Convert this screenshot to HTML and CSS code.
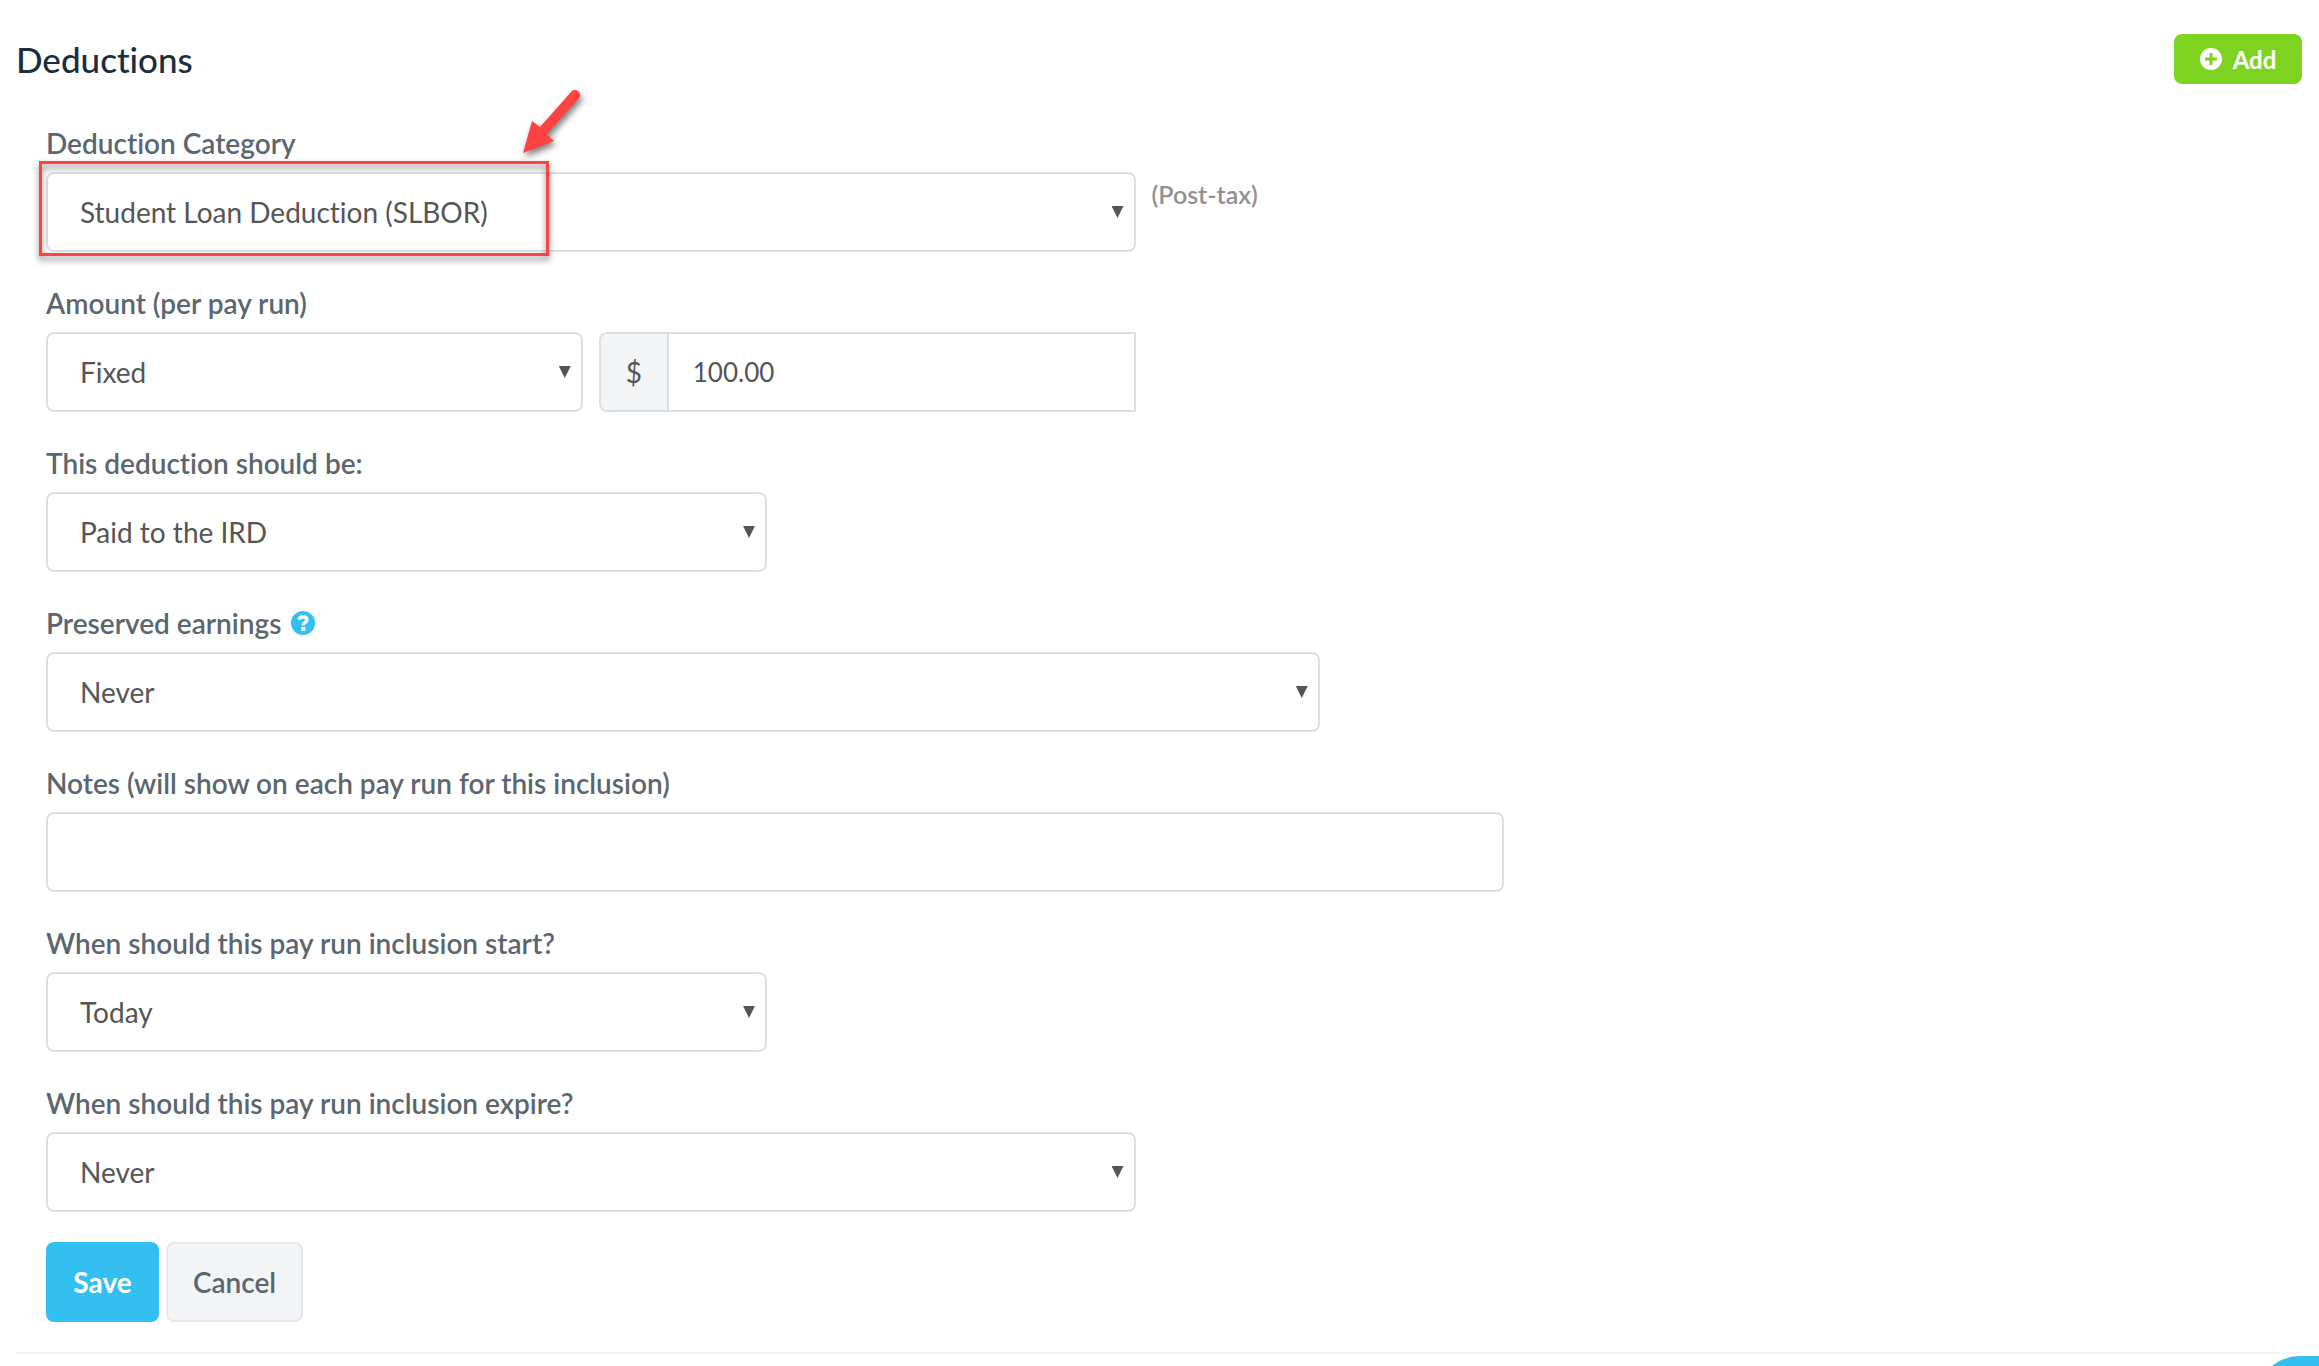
FILE: index.html
```
<!DOCTYPE html>
<html lang="en">
<head>
	<meta charset="utf-8">
	<title>Deductions</title>
	<link rel="stylesheet" href="styles.css">
</head>
<body>

<div class="panel">
	<div class="panel-header">
		<h2>Deductions</h2>
		<button type="button" class="btn btn-add">
			<svg class="icon-plus" viewBox="0 0 22 22" aria-hidden="true">
				<circle cx="11" cy="11" r="11" fill="#fff"/>
				<path d="M11 5v12M5 11h12" stroke="#7ed321" stroke-width="3"/>
			</svg>
			Add
		</button>
	</div>

	<form class="form">
		<div class="form-group">
			<label for="category">Deduction Category</label>
			<div class="row">
				<div class="col-6 select">
					<select id="category" class="form-control"><option>Student Loan Deduction (SLBOR)</option></select>
					<!-- callout round the selected category -->
					<div class="highlight"></div>
					<svg class="arrow" viewBox="0 0 80 80" aria-hidden="true">
						<path d="M62 15L30 51" stroke="#ff4343" stroke-width="10" stroke-linecap="round"/>
						<path d="M10 73L19 41L27 47L34 55L41 61Z" fill="#ff4343"/>
					</svg>
				</div>
				<span class="hint">(Post-tax)</span>
			</div>
		</div>

		<div class="form-group">
			<label for="amount-type">Amount (per pay run)</label>
			<div class="row">
				<div class="col-3 select">
					<select id="amount-type" class="form-control"><option>Fixed</option></select>
				</div>
				<div class="col-3 input-group">
					<label class="addon" for="amount">$</label>
					<input type="text" id="amount" class="form-control" value="100.00">
				</div>
			</div>
		</div>

		<div class="form-group">
			<label for="paid-to">This deduction should be:</label>
			<div class="row">
				<div class="col-4 select">
					<select id="paid-to" class="form-control"><option>Paid to the IRD</option></select>
				</div>
			</div>
		</div>

		<div class="form-group">
			<label for="preserved">Preserved earnings
				<svg class="icon-help" viewBox="0 0 24 24" aria-hidden="true">
					<circle cx="12" cy="12" r="12" fill="#33bff0"/>
					<path d="M7.7 8.6C8.7 6.500 10.200 5.700 12 5.700C14.300 5.700 15.900 7 15.900 8.900C15.900 11.300 12.200 11.400 12.200 14.400" fill="none" stroke="#fff" stroke-width="3.400"/>
					<path d="M10.300 16h4v4h-4z" fill="#fff"/>
				</svg>
			</label>
			<div class="row">
				<div class="col-7 select">
					<select id="preserved" class="form-control"><option>Never</option></select>
				</div>
			</div>
		</div>

		<div class="form-group">
			<label for="notes">Notes (will show on each pay run for this inclusion)</label>
			<div class="row">
				<div class="col-8">
					<input type="text" id="notes" class="form-control">
				</div>
			</div>
		</div>

		<div class="form-group">
			<label for="start">When should this pay run inclusion start?</label>
			<div class="row">
				<div class="col-4 select">
					<select id="start" class="form-control"><option>Today</option></select>
				</div>
			</div>
		</div>

		<div class="form-group">
			<label for="expire">When should this pay run inclusion expire?</label>
			<div class="row">
				<div class="col-6 select">
					<select id="expire" class="form-control"><option>Never</option></select>
				</div>
			</div>
		</div>

		<div class="actions">
			<button type="button" class="btn btn-save">Save</button>
			<button type="button" class="btn btn-cancel">Cancel</button>
		</div>
	</form>
	<hr>
</div>

<button type="button" class="help-tab" aria-label="Help"></button>

</body>
</html>
```
FILE: styles.css
```
* {box-sizing: border-box;}
body {margin: 0; background: #fff; color: #5b6770; font: 28px/40px Lato, "Liberation Sans", sans-serif; font-variant-ligatures: none;}

.panel {padding: 34px 17px 0 16px;}
.panel-header {display: flex; justify-content: space-between; height: 88px;}
h2 {margin: 0; padding-top: 2px; color: #1c2e3b; font-size: 35px; line-height: 46px; font-weight: 500;}
hr {margin: 30px 0 0; border: 0; border-top: 2px solid #f3f4f6;}

/* buttons */
.btn {display: flex; align-items: center; justify-content: center; border: 0; border-radius: 8px; font-family: inherit; font-size: 28px;}
.btn-add {gap: 11px; width: 128px; height: 50px; background: #7ed321; color: #fff; font-size: 24px; font-weight: 700;}
.btn-save {width: 113px; height: 80px; background: #33bff0; color: #fff; font-weight: 700;}
.btn-cancel {width: 137px; height: 80px; background: #f3f4f6; border: 2px solid #e4e7ed; color: #5b6770; font-weight: 600;}
.icon-plus {width: 22px; height: 22px;}
.actions {display: flex; gap: 7px;}

/* form, on a 12 column grid */
.form {margin: 0 61px 0 30px;}
.form-group {margin-bottom: 30px;}
.form-group > label {display: flex; align-items: center; gap: 10px; height: 50px; padding-bottom: 8px; font-weight: 600;}
.icon-help {width: 24px; height: 24px;}
.row {display: grid; grid-template-columns: repeat(12, 1fr); column-gap: 16px;}
.col-3 {grid-column: span 3;}
.col-4 {grid-column: span 4;}
.col-6 {grid-column: span 6;}
.col-7 {grid-column: span 7;}
.col-8 {grid-column: span 8;}
.hint {grid-column: span 2; padding-top: 2px; color: #919191; font-size: 25px; font-weight: 600;}

.form-control {
	display: block; width: 100%; height: 80px; padding: 0 32px;
	border: 2px solid #dae1e4; border-radius: 8px; background: #fff;
	color: #555; font-family: inherit; font-size: 28px; font-weight: 400; font-variant-ligatures: none;
	appearance: none;
}
.select {position: relative;}
.select::after {
	content: ""; position: absolute; top: 34px; right: 12px; width: 12px; height: 12px;
	background: #555; clip-path: polygon(0 0, 100% 0, 50% 100%); pointer-events: none;
}
.input-group {display: flex;}
.addon {
	flex: 0 0 68px; line-height: 76px; text-align: center; color: #555;
	background: #f3f4f6; border: 2px solid #dae1e4; border-right: 0; border-radius: 8px 0 0 8px;
}
.input-group .form-control {flex: 1; min-width: 0; padding: 0 24px; border-radius: 0; font-size: 26px;}

/* callout */
.highlight {
	position: absolute; top: -11px; left: -7px; width: 510px; height: 95px;
	border: 3px solid #ff4343; filter: drop-shadow(0 4px 3px rgba(0,0,0,.5)); pointer-events: none;
}
.arrow {
	position: absolute; top: -92px; left: 467px; width: 80px; height: 80px;
	filter: drop-shadow(2px 4px 3px rgba(0,0,0,.5)); pointer-events: none;
}

.help-tab {position: fixed; right: -97px; bottom: -78px; width: 160px; height: 88px; border: 0; border-radius: 44px; background: #33bff0;}
```
